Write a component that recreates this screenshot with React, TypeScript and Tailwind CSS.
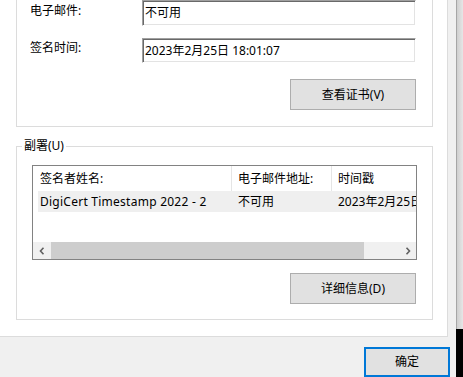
import React from "react";

const font = { fontFamily: '"Noto Sans", "Noto Sans CJK SC", sans-serif' };

function Field({ value, h }: { value: string; h: string }) {
  return (
    <div
      className={`w-[274px] ${h} flex items-center pl-[2px] bg-white border-t border-l border-[#a0a0a0] border-r border-b border-r-white border-b-white shadow-[inset_1px_1px_0_#696969,inset_-1px_-1px_0_#e3e3e3] text-[12px] leading-[16px] text-black`}
    >
      {value}
    </div>
  );
}

function Btn({ label }: { label: string }) {
  return (
    <div className="self-end mr-[16px] w-[126px] h-[31px] flex items-center justify-center bg-[#e1e1e1] border border-[#adadad] text-[12px] text-black">
      {label}
    </div>
  );
}

function Chevron({ dir }: { dir: "l" | "r" }) {
  return (
    <svg width="6" height="8" viewBox="0 0 6 8">
      <path
        d={dir === "l" ? "M4.5 0.8 L1.5 4 L4.5 7.2" : "M1.5 0.8 L4.5 4 L1.5 7.2"}
        fill="none"
        stroke="#606060"
        strokeWidth="1.6"
      />
    </svg>
  );
}

export default function App() {
  return (
    <div className="w-[463px] h-[377px] flex bg-[#f0f0f0] overflow-hidden text-black" style={font}>
      <div className="w-[456px] flex flex-col">
        {/* white property page */}
        <div className="w-[448px] h-[340px] bg-white border-r border-b border-[#dcdcdc] pl-[16px] flex flex-col">
          <div className="w-[417px] h-[127px] border-x border-b border-[#dcdcdc] flex flex-col">
            <div className="flex items-start">
              <div className="w-[125px] pl-[13px] mt-[3px] text-[12px] leading-[16px]">电子邮件:</div>
              <Field value="不可用" h="h-[26px]" />
            </div>
            <div className="flex items-start mt-[12px]">
              <div className="w-[125px] pl-[13px] mt-[2px] text-[12px] leading-[16px]">签名时间:</div>
              <Field value="2023年2月25日 18:01:07" h="h-[25px]" />
            </div>
            <div className="mt-[16px] flex flex-col">
              <Btn label="查看证书(V)" />
            </div>
          </div>

          <div className="relative mt-[19px] w-[417px] h-[174px] border border-[#dcdcdc] flex flex-col">
            <div className="absolute left-[5px] top-[-9px] bg-white px-[2px] text-[12px] leading-[16px]">副署(U)</div>
            <div className="ml-[15px] mt-[18px] w-[385px] h-[95px] border border-[#828282] flex flex-col text-[12px] leading-[16px]">
              <div className="h-[25px] flex shrink-0">
                <div className="w-[199px] pl-[7px] flex items-center border-r border-[#e5e5e5]">签名者姓名:</div>
                <div className="w-[100px] pl-[6px] flex items-center border-r border-[#e5e5e5]">电子邮件地址:</div>
                <div className="flex-1 pl-[6px] flex items-center whitespace-nowrap overflow-hidden">时间戳</div>
              </div>
              <div className="h-[21px] ml-[5px] flex shrink-0 bg-[#efefef]">
                <div className="w-[194px] pl-[2px] flex items-center whitespace-nowrap tracking-[0.25px]">DigiCert Timestamp 2022 - 2</div>
                <div className="w-[100px] pl-[6px] flex items-center">不可用</div>
                <div className="flex-1 pl-[6px] flex items-center whitespace-nowrap overflow-hidden">2023年2月25日 18:01:07</div>
              </div>
              <div className="flex-1" />
              <div className="h-[17px] flex shrink-0 bg-[#f0f0f0]">
                <div className="w-[17px] flex items-center justify-center">
                  <Chevron dir="l" />
                </div>
                <div className="ml-px w-[313px] bg-[#cdcdcd]" />
                <div className="flex-1" />
                <div className="w-[17px] flex items-center justify-center">
                  <Chevron dir="r" />
                </div>
              </div>
            </div>
            <div className="mt-[13px] flex flex-col">
              <Btn label="详细信息(D)" />
            </div>
          </div>
        </div>

        {/* dialog footer */}
        <div className="mt-[10px] ml-[364px] w-[86px] h-[30px] flex items-center justify-center bg-[#e1e1e1] border-2 border-[#0078d7] text-[12px]">
          确定
        </div>
      </div>

      <div className="w-[7px] flex flex-col">
        <div className="h-[329px] border-l border-[#a6a6a6] bg-gradient-to-r from-[#cfcfcf] to-[#e6e6e6]" />
        <div className="flex-1 bg-black" />
      </div>
    </div>
  );
}
